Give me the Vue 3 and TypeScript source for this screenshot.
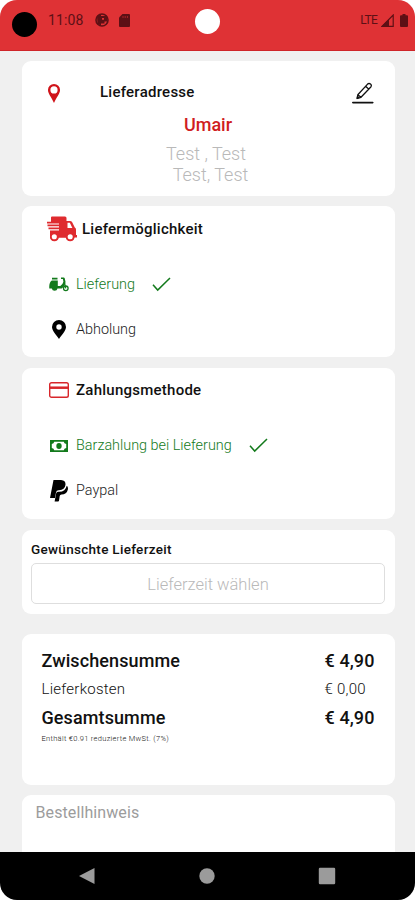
<script setup lang="ts">
import { ref } from 'vue'

interface Option {
  id: string
  label: string
}

interface SumRow {
  label: string
  value: string
  strong: boolean
}

const deliveryOptions: Option[] = [
  { id: 'delivery', label: 'Lieferung' },
  { id: 'pickup', label: 'Abholung' },
]
const paymentOptions: Option[] = [
  { id: 'cash', label: 'Barzahlung bei Lieferung' },
  { id: 'paypal', label: 'Paypal' },
]
const delivery = ref('delivery')
const payment = ref('cash')

const sums: SumRow[] = [
  { label: 'Zwischensumme', value: '€ 4,90', strong: true },
  { label: 'Lieferkosten', value: '€ 0,00', strong: false },
  { label: 'Gesamtsumme', value: '€ 4,90', strong: true },
]
</script>

<template>
  <div class="phone">
    <header class="status">
      <span class="camera"></span>
      <span class="time">11:08</span>
      <svg class="s-app" viewBox="0 0 14 14">
        <circle cx="7" cy="7" r="6" fill="none" stroke="#5d1015" stroke-width="1.6" />
        <path d="M2 3.500L6 1v11.500L2.500 11z" fill="#5d1015" />
        <path d="M6 3h6v5.500H9.500v2H6z" fill="#5d1015" />
        <path d="M7 5h2v1.800H7z" fill="#df3235" />
      </svg>
      <svg class="s-card" viewBox="0 0 11 13">
        <path d="M3.500 0H10q1 0 1 1v11q0 1-1 1H1q-1 0-1-1V3.500z" fill="#5d1015" />
        <path d="M4 2v2M6.200 2v2M8.400 2v2" stroke="#b3272b" stroke-width=".9" />
      </svg>
      <span class="notch"></span>
      <span class="lte">LTE</span>
      <svg class="s-signal" viewBox="0 0 13 13">
        <path d="M12.200 1v11.300H1z" fill="none" stroke="#5d1015" stroke-width="1.200" />
        <path d="M8 5v7.500H.5z" fill="#5d1015" />
      </svg>
      <svg class="s-battery" viewBox="0 0 8 13">
        <path d="M2.500 0h3v1.300H7q1 0 1 1V12q0 1-1 1H1q-1 0-1-1V2.300q0-1 1-1h1.500z" fill="#5d1015" />
      </svg>
    </header>

    <main class="content">
      <section class="card address">
        <div class="address-head">
          <svg class="pin-red" viewBox="0 0 12 19">
            <path d="M6 0a6 6 0 0 1 6 6.200C12 9.500 8.500 13 6 19 3.500 13 0 9.500 0 6.200A6 6 0 0 1 6 0zm0 2.300a3.600 3.600 0 1 0 0 7.200 3.600 3.600 0 0 0 0-7.200z" fill="#d0141a" fill-rule="evenodd" />
          </svg>
          <h2 class="title">Lieferadresse</h2>
          <svg class="edit" viewBox="0 0 22 22" fill="none" stroke="#111">
            <path d="M5.800 12.800L15.600 2.100q1.400-1.300 2.900 0t.3 2.900L9 15.300l-3.900 1.200zM13.600 4.300l3 2.700M5.800 12.800L9 15.300" stroke-width="1.300" stroke-linejoin="round" />
            <path d="M5 16.500l.5-2.300 1.800 1.500z" fill="#111" />
            <path d="M.8 20.600h20" stroke-width="1.600" stroke-linecap="round" />
          </svg>
        </div>
        <p class="name">Umair</p>
        <p class="line">Test , Test</p>
        <p class="line second">Test, Test</p>
      </section>

      <section class="card choice shipping">
        <div class="choice-head">
          <svg class="truck" viewBox="0 0 30 26">
            <path d="M4 1.500Q4 .5 5 .5h13q1.500 0 1.500 1.500v3H23q1.500 0 2.200 1.200l2.600 5.300q1.200.7 1.200 2V19h1v2.500h-2.400a4.500 4.500 0 0 1-8.800.2h-7a4.500 4.500 0 0 1-8.800-.2V14.500h9v-1.300H1.500v-1.700h10.500v-1.200H.5V8.600h11.500V7.400H0V5.700h4z" fill="#df2b2f" />
            <path d="M20.500 6.800h2.300l2.600 5.300h-4.900z" fill="#fff" />
            <circle cx="7.300" cy="20.800" r="3.300" fill="#fff" stroke="#df2b2f" stroke-width="1.500" />
            <circle cx="23.200" cy="20.800" r="3.300" fill="#fff" stroke="#df2b2f" stroke-width="1.500" />
          </svg>
          <h2 class="title">Liefermöglichkeit</h2>
        </div>
        <button
          v-for="option in deliveryOptions"
          :key="option.id"
          class="option"
          :class="{ active: delivery === option.id }"
          @click="delivery = option.id"
        >
          <span class="icon-slot">
            <svg v-if="option.id === 'delivery'" class="scooter" viewBox="0 0 20 15">
              <path d="M3 .8h5.500v1.700H3zM2.800 3.400h6V9h2.500q2.500-1.600 3.100-4.300L13.900 2H12V.5h2.700q.8 0 1 .8l.8 3.400q-.4 4.700-3.800 6.800H8.500a2.900 2.900 0 0 1-5.700 0H.3Q-.2 5.500 2.800 3.400z" fill="#137a1c" />
              <circle cx="16.800" cy="11.300" r="2.300" fill="none" stroke="#137a1c" stroke-width="1.300" />
              <path d="M15.300 5l1.500 6.300" stroke="#137a1c" stroke-width="1.200" />
            </svg>
            <svg v-else class="pin-black" viewBox="0 0 14 19">
              <path d="M7 0a7 7 0 0 1 7 7c0 3.500-4 7.500-7 12C4 14.500 0 10.500 0 7a7 7 0 0 1 7-7zm0 4.300a2.700 2.700 0 1 0 0 5.400 2.700 2.700 0 0 0 0-5.400z" fill="#000" fill-rule="evenodd" />
            </svg>
          </span>
          <span class="label">{{ option.label }}</span>
          <svg v-if="delivery === option.id" class="check" viewBox="0 0 19 15">
            <path d="M1 7.800l4.700 5.300L18 1" fill="none" stroke="#137a1c" stroke-width="1.500" />
          </svg>
        </button>
      </section>

      <section class="card choice paying">
        <div class="choice-head">
          <svg class="credit" viewBox="0 0 20 16">
            <rect x=".7" y=".7" width="18.600" height="14.600" rx="1.800" fill="none" stroke="#d8262b" stroke-width="1.400" />
            <path d="M1 5.700h18" stroke="#d8262b" stroke-width="2.500" />
          </svg>
          <h2 class="title">Zahlungsmethode</h2>
        </div>
        <button
          v-for="option in paymentOptions"
          :key="option.id"
          class="option"
          :class="{ active: payment === option.id }"
          @click="payment = option.id"
        >
          <span class="icon-slot">
            <svg v-if="option.id === 'cash'" class="cash" viewBox="0 0 18 12">
              <path d="M0 0h18v12H0zM4.200 1.800Q4 3.800 1.800 4v4q2.200.2 2.400 2.200h9.600q.2-2 2.400-2.200V4q-2.200-.2-2.400-2.200z" fill="#137a1c" fill-rule="evenodd" />
              <ellipse cx="9" cy="6" rx="2.700" ry="3" fill="#137a1c" />
            </svg>
            <svg v-else class="paypal" viewBox="0 0 18 22">
              <path d="M3.500 0H11q4.800.3 4.500 4.800-.7 5.300-6.500 5.400-2.600-.2-3 2.200L5 18H0z" fill="#000" />
              <path d="M16.700 5.800q1.800 1.300 1.100 4-1.100 4.700-6.300 4.700-1.500 0-1.800 1.500L9 20.800q-.1.800-1 .8H4.600l1.600-8.300q.3-1.500 1.800-1.500 7.500.5 8.700-6z" fill="#000" />
            </svg>
          </span>
          <span class="label">{{ option.label }}</span>
          <svg v-if="payment === option.id" class="check" viewBox="0 0 19 15">
            <path d="M1 7.800l4.700 5.300L18 1" fill="none" stroke="#137a1c" stroke-width="1.500" />
          </svg>
        </button>
      </section>

      <section class="card when">
        <h2 class="when-title">Gewünschte Lieferzeit</h2>
        <button class="picker">Lieferzeit wählen</button>
      </section>

      <section class="card totals">
        <div v-for="row in sums" :key="row.label" class="sum" :class="{ strong: row.strong }">
          <span class="sum-label">{{ row.label }}</span>
          <span class="sum-value">{{ row.value }}</span>
        </div>
        <p class="tax">Enthält €0.91 reduzierte MwSt. (7%)</p>
      </section>

      <section class="card note"><span>Bestellhinweis</span></section>
    </main>

    <nav class="nav">
      <svg viewBox="0 0 18 18"><path d="M16.500 1v16L1 9z" fill="#9b9b9b" /></svg>
      <svg viewBox="0 0 18 18"><circle cx="9" cy="9" r="7.700" fill="#9b9b9b" /></svg>
      <svg viewBox="0 0 18 18"><rect x=".8" y=".8" width="16.400" height="16.400" rx="1.200" fill="#9b9b9b" /></svg>
    </nav>
  </div>
</template>

<style>
body {
  background: #fff;
}
</style>

<style scoped>
.phone {
  display: flex;
  flex-direction: column;
  height: 900px;
  overflow: hidden;
  border-radius: 17px;
  background: #f0f0f0;
  font-family: Roboto, "Liberation Sans", sans-serif;
  color: #111;
}
.phone * {
  box-sizing: border-box;
}
h2,
p {
  margin: 0;
}
svg {
  display: block;
  flex: none;
}
button {
  font: inherit;
  background: none;
  border: 0;
  padding: 0;
  text-align: left;
}
.status {
  flex: none;
  display: flex;
  align-items: center;
  height: 51px;
  padding: 0 7px 10px 12px;
  background: #df3235;
  border-bottom: 1px solid #cf2529;
  color: #5d1015;
}
.camera {
  width: 25px;
  height: 25px;
  margin-top: 8px;
  border-radius: 50%;
  background: #000;
}
.time {
  width: 47px;
  margin-left: 11px;
  font-size: 14px;
  letter-spacing: 0.1px;
}
.s-app {
  width: 14px;
  height: 14px;
}
.s-card {
  width: 11px;
  height: 13px;
  margin-left: 10px;
}
.notch {
  width: 25px;
  height: 25px;
  margin: 3px 0 0 65px;
  border-radius: 50%;
  background: #fff;
}
.lte {
  margin-left: auto;
  font-size: 12px;
  letter-spacing: -0.7px;
}
.s-signal {
  width: 13px;
  height: 13px;
  margin-left: 4px;
}
.s-battery {
  width: 8px;
  height: 13px;
  margin-left: 6px;
}
.content {
  flex: 1;
  min-height: 0;
  display: flex;
  flex-direction: column;
  padding: 10px 20.5px 0 21.5px;
  overflow: hidden;
}
.card {
  flex: none;
  background: #fff;
  border-radius: 9px;
}
.title {
  font-size: 15px;
  font-weight: 500;
  letter-spacing: 0.25px;
}
.address {
  height: 135px;
  padding-top: 16px;
  text-align: center;
}
.address-head {
  display: flex;
  align-items: center;
  height: 30px;
  padding: 0 20.5px 0 26px;
}
.address-head .title {
  margin-left: 40.5px;
}
.pin-red {
  width: 12px;
  height: 19px;
  margin-top: 2px;
}
.edit {
  width: 22px;
  height: 22px;
  margin: 2px 0 0 auto;
}
.name {
  height: 36px;
  line-height: 35px;
  font-size: 18px;
  font-weight: 500;
  color: #d01d22;
}
.line {
  line-height: 21px;
  font-size: 18px;
  font-weight: 300;
  color: #b9b9b9;
  padding-right: 4px;
}
.line.second {
  padding: 0 0 0 5px;
}
.choice {
  height: 151px;
  margin-top: 10px;
}
.choice.paying {
  margin-top: 11px;
}
.choice-head {
  display: flex;
  align-items: center;
  height: 45px;
  margin-bottom: 11px;
  padding-left: 25px;
}
.paying .choice-head {
  height: 44px;
}
.truck {
  width: 30px;
  height: 26px;
  margin-top: 1px;
}
.shipping .title {
  margin-left: 5.5px;
}
.credit {
  width: 20px;
  height: 16px;
  margin-left: 2px;
}
.paying .title {
  margin-left: 7.5px;
}
.option {
  display: flex;
  align-items: center;
  width: 100%;
  height: 45px;
  padding-left: 26.5px;
  font-size: 14.4px;
  font-weight: 300;
  color: #222;
}
.option.active {
  color: #137a1c;
}
.icon-slot {
  display: flex;
  justify-content: center;
  width: 21px;
  margin-right: 7px;
}
.scooter {
  width: 20px;
  height: 15px;
}
.pin-black {
  width: 14px;
  height: 19px;
}
.cash {
  width: 18px;
  height: 12px;
}
.paypal {
  width: 18px;
  height: 22px;
}
.check {
  width: 19px;
  height: 15px;
  margin: -1px 0 0 17.5px;
}
.when {
  height: 84px;
  margin-top: 11px;
  padding: 11px 9.5px 0;
}
.when-title {
  height: 22px;
  line-height: 17px;
  font-size: 13.5px;
  font-weight: 500;
  letter-spacing: 0.3px;
}
.picker {
  display: block;
  width: 100%;
  height: 41px;
  padding-top: 2px;
  border: 1.5px solid #dedede;
  border-radius: 5px;
  text-align: center;
  font-size: 16.5px;
  font-weight: 300;
  color: #b9b9b9;
}
.totals {
  height: 151px;
  margin-top: 20px;
  padding: 12px 0 0 20px;
}
.sum {
  display: flex;
  align-items: center;
  height: 28.5px;
  font-size: 15px;
  font-weight: 300;
  letter-spacing: 0.25px;
}
.sum.strong {
  font-size: 18px;
  font-weight: 500;
  letter-spacing: 0.1px;
}
.sum-label {
  width: 283px;
}
.tax {
  line-height: 13px;
  font-size: 7.5px;
  font-weight: 300;
  letter-spacing: 0.3px;
}
.note {
  height: 80px;
  margin-top: 10px;
  padding: 8px 0 0 14px;
  font-size: 16px;
  line-height: 20px;
  letter-spacing: 0.1px;
  color: #9c9c9c;
}
.nav {
  flex: none;
  display: flex;
  justify-content: space-between;
  align-items: center;
  height: 48px;
  padding: 0 79px 0 78px;
  background: #000;
}
.nav svg {
  width: 18px;
  height: 18px;
}
</style>
